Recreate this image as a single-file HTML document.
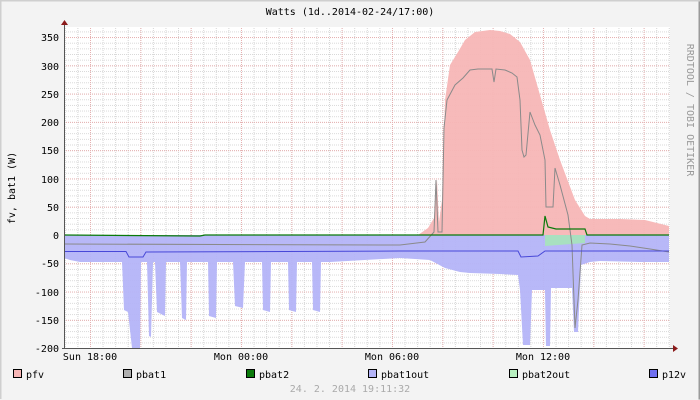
<!DOCTYPE html>
<html><head><style>
html,body{margin:0;padding:0;}
body{width:700px;height:400px;overflow:hidden;background:#f3f3f3;}
svg{display:block;font-family:"DejaVu Sans Mono","Liberation Mono",monospace;}
</style></head><body>
<svg width="700" height="400" xmlns="http://www.w3.org/2000/svg">
<defs>
<pattern id="mv" patternUnits="userSpaceOnUse" x="64.8" y="0" width="12.583" height="4">
<line x1="0.5" y1="0" x2="0.5" y2="4" stroke="#d4d4d4" stroke-dasharray="1,1"/></pattern>
<pattern id="mh" patternUnits="userSpaceOnUse" x="0" y="235" width="4" height="5.655">
<line x1="0" y1="0.5" x2="4" y2="0.5" stroke="#d8d8d8" stroke-dasharray="1,1"/></pattern>
<pattern id="Mv" patternUnits="userSpaceOnUse" x="90" y="0" width="50.33" height="4">
<line x1="0.5" y1="0" x2="0.5" y2="4" stroke="#e6b0b0" stroke-dasharray="1,1"/></pattern>
<pattern id="Mh" patternUnits="userSpaceOnUse" x="0" y="235" width="4" height="28.28">
<line x1="0" y1="0.5" x2="4" y2="0.5" stroke="#e6b0b0" stroke-dasharray="1,1"/></pattern>
</defs>
<rect x="0" y="0" width="700" height="400" fill="#f3f3f3"/>
<path d="M0 0.5H699.5V399.5" stroke="#9a9a9a" fill="none" stroke-width="2"/>
<path d="M0.5 399V0.5H700" stroke="#cfcfcf" fill="none" stroke-width="2"/>
<rect x="64" y="27" width="606" height="321" fill="#fff"/>
<rect x="64" y="27" width="606" height="321" fill="url(#mv)"/>
<rect x="64" y="27" width="606" height="321" fill="url(#mh)"/>
<rect x="64" y="27" width="606" height="321" fill="url(#Mv)"/>
<rect x="64" y="27" width="606" height="321" fill="url(#Mh)"/>
<!-- pfv -->
<polygon fill="#f7b6b6" fill-opacity="0.95" points="418,235 428,228 434,218 437,180 439,222 442,200 445,100 450,65 458,52 465,40 475,32 490,30 500,31 510,34 520,42 530,60 540,95 550,130 560,160 575,200 585,216 590,219 620,219 645,220 669,226 669,235"/>
<!-- pbat1out -->
<polygon fill="#b4b4f8" fill-opacity="0.95" points="64,235 669,235 669,262 640,262 600,261 590,262 581,265 578,332 574,332 572,288 560,288 551,288 550,346 546,346 545,290 536,290 532,290 530,345 523,345 520,290 518,275 500,274 470,273 460,272 445,268 430,260 400,258 330,262 321,262 320,312 313,310 312,262 297,262 296,312 289,310 288,262 271,262 270,312 263,310 262,262 245,262 243,308 235,306 233,262 217,262 216,318 209,316 208,262 187,262 186,320 182,318 180,262 166,262 165,316 157,312 155,262 153,262 151,337 149,336 147,262 141,262 140,348 132,348 128,312 124,310 122,262 80,262 70,260 64,258"/>
<!-- pbat2out -->
<polygon fill="#a8e0c0" points="545,235 585,235 585,243 545,246"/>
<!-- pbat1 -->
<polyline fill="none" stroke="#8a8a8a" stroke-width="1" points="64,244 400,245 425,242 434,232 436,180 438,232 442,232 444,128 447,100 455,85 463,78 470,70 478,69 490,69 492,69 494,82 496,69 505,70 512,73 517,77 520,100 522,150 524,157 526,155 530,112 535,125 540,135 545,160 546,207 553,207 555,168 560,185 568,215 572,245 575,328 578,300 582,245 590,243 610,244 630,246 650,249 669,252"/>
<!-- pbat2 -->
<polyline fill="none" stroke="#0a7a0a" stroke-width="1.2" points="64,235 200,236 205,235 543,235 545,216 548,227 556,229 585,229 587,235 669,235"/>
<!-- p12v -->
<polyline fill="none" stroke="#4848d8" stroke-width="1" points="64,251.5 126,251.5 129,257 143,257 146,252 400,251 518,251 521,257 538,256 545,251 580,251 620,251 669,251"/>
<!-- axes -->
<line x1="64.5" y1="25" x2="64.5" y2="348" stroke="#555"/>
<polygon points="61,25 68,25 64.5,20" fill="#8b1a1a"/>
<line x1="62" y1="348.5" x2="673" y2="348.5" stroke="#555"/>
<polygon points="673,345 673,352 678,348.5" fill="#8b1a1a"/>
<g font-size="10" fill="#000" text-anchor="end">
<text x="59" y="41">350</text><text x="59" y="70">300</text><text x="59" y="98">250</text>
<text x="59" y="126">200</text><text x="59" y="154">150</text><text x="59" y="183">100</text>
<text x="59" y="211">50</text><text x="59" y="239">0</text><text x="59" y="267">-50</text>
<text x="59" y="296">-100</text><text x="59" y="324">-150</text><text x="59" y="352">-200</text>
</g>
<g font-size="10" fill="#000" text-anchor="middle">
<text x="90" y="360">Sun 18:00</text><text x="241" y="360">Mon 00:00</text>
<text x="392" y="360">Mon 06:00</text><text x="543" y="360">Mon 12:00</text>
<text x="350" y="15">Watts (1d..2014-02-24/17:00)</text>
<text x="350" y="392" fill="#aaa">24. 2. 2014 19:11:32</text>
</g>
<text x="15" y="188" font-size="10" text-anchor="middle" transform="rotate(-90 15 188)">fv, bat1 (W)</text>
<text x="687" y="110" font-size="10" fill="#999" text-anchor="middle" transform="rotate(90 687 110)">RRDTOOL / TOBI OETIKER</text>
<g font-size="10" fill="#000">
<rect x="13.5" y="369.5" width="8" height="8" fill="#f7b6b6" stroke="#000" stroke-width="1"/><text x="26" y="378">pfv</text>
<rect x="123.5" y="369.5" width="8" height="8" fill="#b0b0b0" stroke="#000" stroke-width="1"/><text x="136" y="378">pbat1</text>
<rect x="246.5" y="369.5" width="8" height="8" fill="#0a7a0a" stroke="#000" stroke-width="1"/><text x="259" y="378">pbat2</text>
<rect x="368.5" y="369.5" width="8" height="8" fill="#b4b4f8" stroke="#000" stroke-width="1"/><text x="381" y="378">pbat1out</text>
<rect x="509.5" y="369.5" width="8" height="8" fill="#b8f0c0" stroke="#000" stroke-width="1"/><text x="522" y="378">pbat2out</text>
<rect x="649.5" y="369.5" width="8" height="8" fill="#7070f0" stroke="#000" stroke-width="1"/><text x="662" y="378">p12v</text>
</g>
</svg>
</body></html>
